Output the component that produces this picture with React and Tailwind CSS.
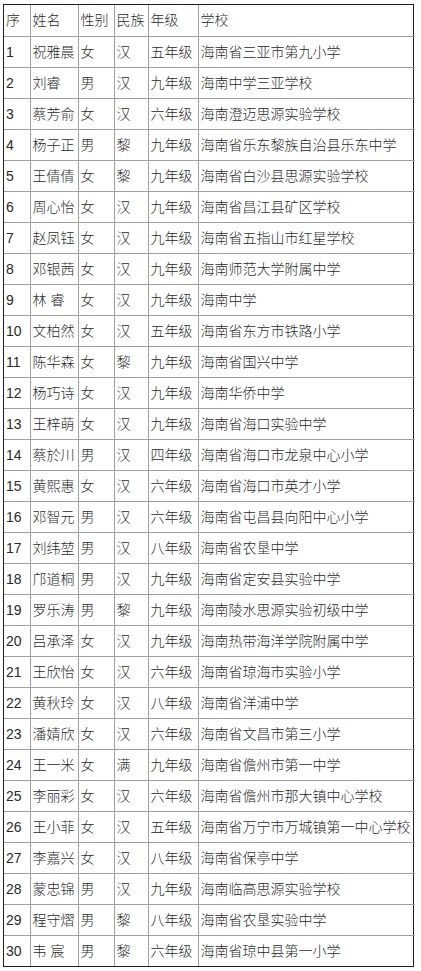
import React from 'react';

const rows = [
    ['1', '祝雅晨', '女', '汉', '五年级', '海南省三亚市第九小学'],
    ['2', '刘睿', '男', '汉', '九年级', '海南中学三亚学校'],
    ['3', '蔡芳俞', '女', '汉', '六年级', '海南澄迈思源实验学校'],
    ['4', '杨子正', '男', '黎', '九年级', '海南省乐东黎族自治县乐东中学'],
    ['5', '王倩倩', '女', '黎', '九年级', '海南省白沙县思源实验学校'],
    ['6', '周心怡', '女', '汉', '九年级', '海南省昌江县矿区学校'],
    ['7', '赵凤钰', '女', '汉', '九年级', '海南省五指山市红星学校'],
    ['8', '邓银茜', '女', '汉', '九年级', '海南师范大学附属中学'],
    ['9', '林 睿', '女', '汉', '九年级', '海南中学'],
    ['10', '文柏然', '女', '汉', '五年级', '海南省东方市铁路小学'],
    ['11', '陈华森', '女', '黎', '九年级', '海南省国兴中学'],
    ['12', '杨巧诗', '女', '汉', '九年级', '海南华侨中学'],
    ['13', '王梓萌', '女', '汉', '九年级', '海南省海口实验中学'],
    ['14', '蔡於川', '男', '汉', '四年级', '海南省海口市龙泉中心小学'],
    ['15', '黄熙惠', '女', '汉', '六年级', '海南省海口市英才小学'],
    ['16', '邓智元', '男', '汉', '六年级', '海南省屯昌县向阳中心小学'],
    ['17', '刘纬堃', '男', '汉', '八年级', '海南省农垦中学'],
    ['18', '邝道桐', '男', '汉', '九年级', '海南省定安县实验中学'],
    ['19', '罗乐涛', '男', '黎', '九年级', '海南陵水思源实验初级中学'],
    ['20', '吕承泽', '女', '汉', '九年级', '海南热带海洋学院附属中学'],
    ['21', '王欣怡', '女', '汉', '六年级', '海南省琼海市实验小学'],
    ['22', '黄秋玲', '女', '汉', '八年级', '海南省洋浦中学'],
    ['23', '潘婧欣', '女', '汉', '六年级', '海南省文昌市第三小学'],
    ['24', '王一米', '女', '满', '九年级', '海南省儋州市第一中学'],
    ['25', '李丽彩', '女', '汉', '六年级', '海南省儋州市那大镇中心学校'],
    ['26', '王小菲', '女', '汉', '五年级', '海南省万宁市万城镇第一中心学校'],
    ['27', '李嘉兴', '女', '汉', '八年级', '海南省保亭中学'],
    ['28', '蒙忠锦', '男', '汉', '九年级', '海南临高思源实验学校'],
    ['29', '程守熠', '男', '黎', '八年级', '海南省农垦实验中学'],
    ['30', '韦 宸', '男', '黎', '六年级', '海南省琼中县第一小学'],
];

const header = ['序', '姓名', '性别', '民族', '年级', '学校'];
const widths = ['w-[26px]', 'w-[48px]', 'w-[36px]', 'w-[34px]', 'w-[50px]', 'w-[217px]'];

export default function App() {
    return (
        <div className="w-[421px] h-[971px] bg-white pt-[4px] pl-[3px]">
            <div
                className="w-[411px] border border-[#1f1f1f] text-[14px] font-light leading-none text-[#2a2a2a]"
                style={{ fontFamily: '"Liberation Sans", "Noto Sans CJK SC", sans-serif' }}
            >
                <table className="w-full table-fixed border-collapse border-hidden">
                    <colgroup>
                        {widths.map((w, i) => (
                            <col key={i} className={w} />
                        ))}
                    </colgroup>
                    <tbody>
                        <tr className="h-[31px]">
                            {header.map((h, i) => (
                                <td key={i} className="border border-[#a0a0a0] pl-[2px] whitespace-nowrap">
                                    {h}
                                </td>
                            ))}
                        </tr>
                        {rows.map((r) => (
                            <tr key={r[0]} className="h-[31px]">
                                {r.map((c, i) => (
                                    <td key={i} className="border border-[#a0a0a0] pl-[2px] whitespace-nowrap overflow-hidden">
                                        {c}
                                    </td>
                                ))}
                            </tr>
                        ))}
                    </tbody>
                </table>
            </div>
        </div>
    );
}
